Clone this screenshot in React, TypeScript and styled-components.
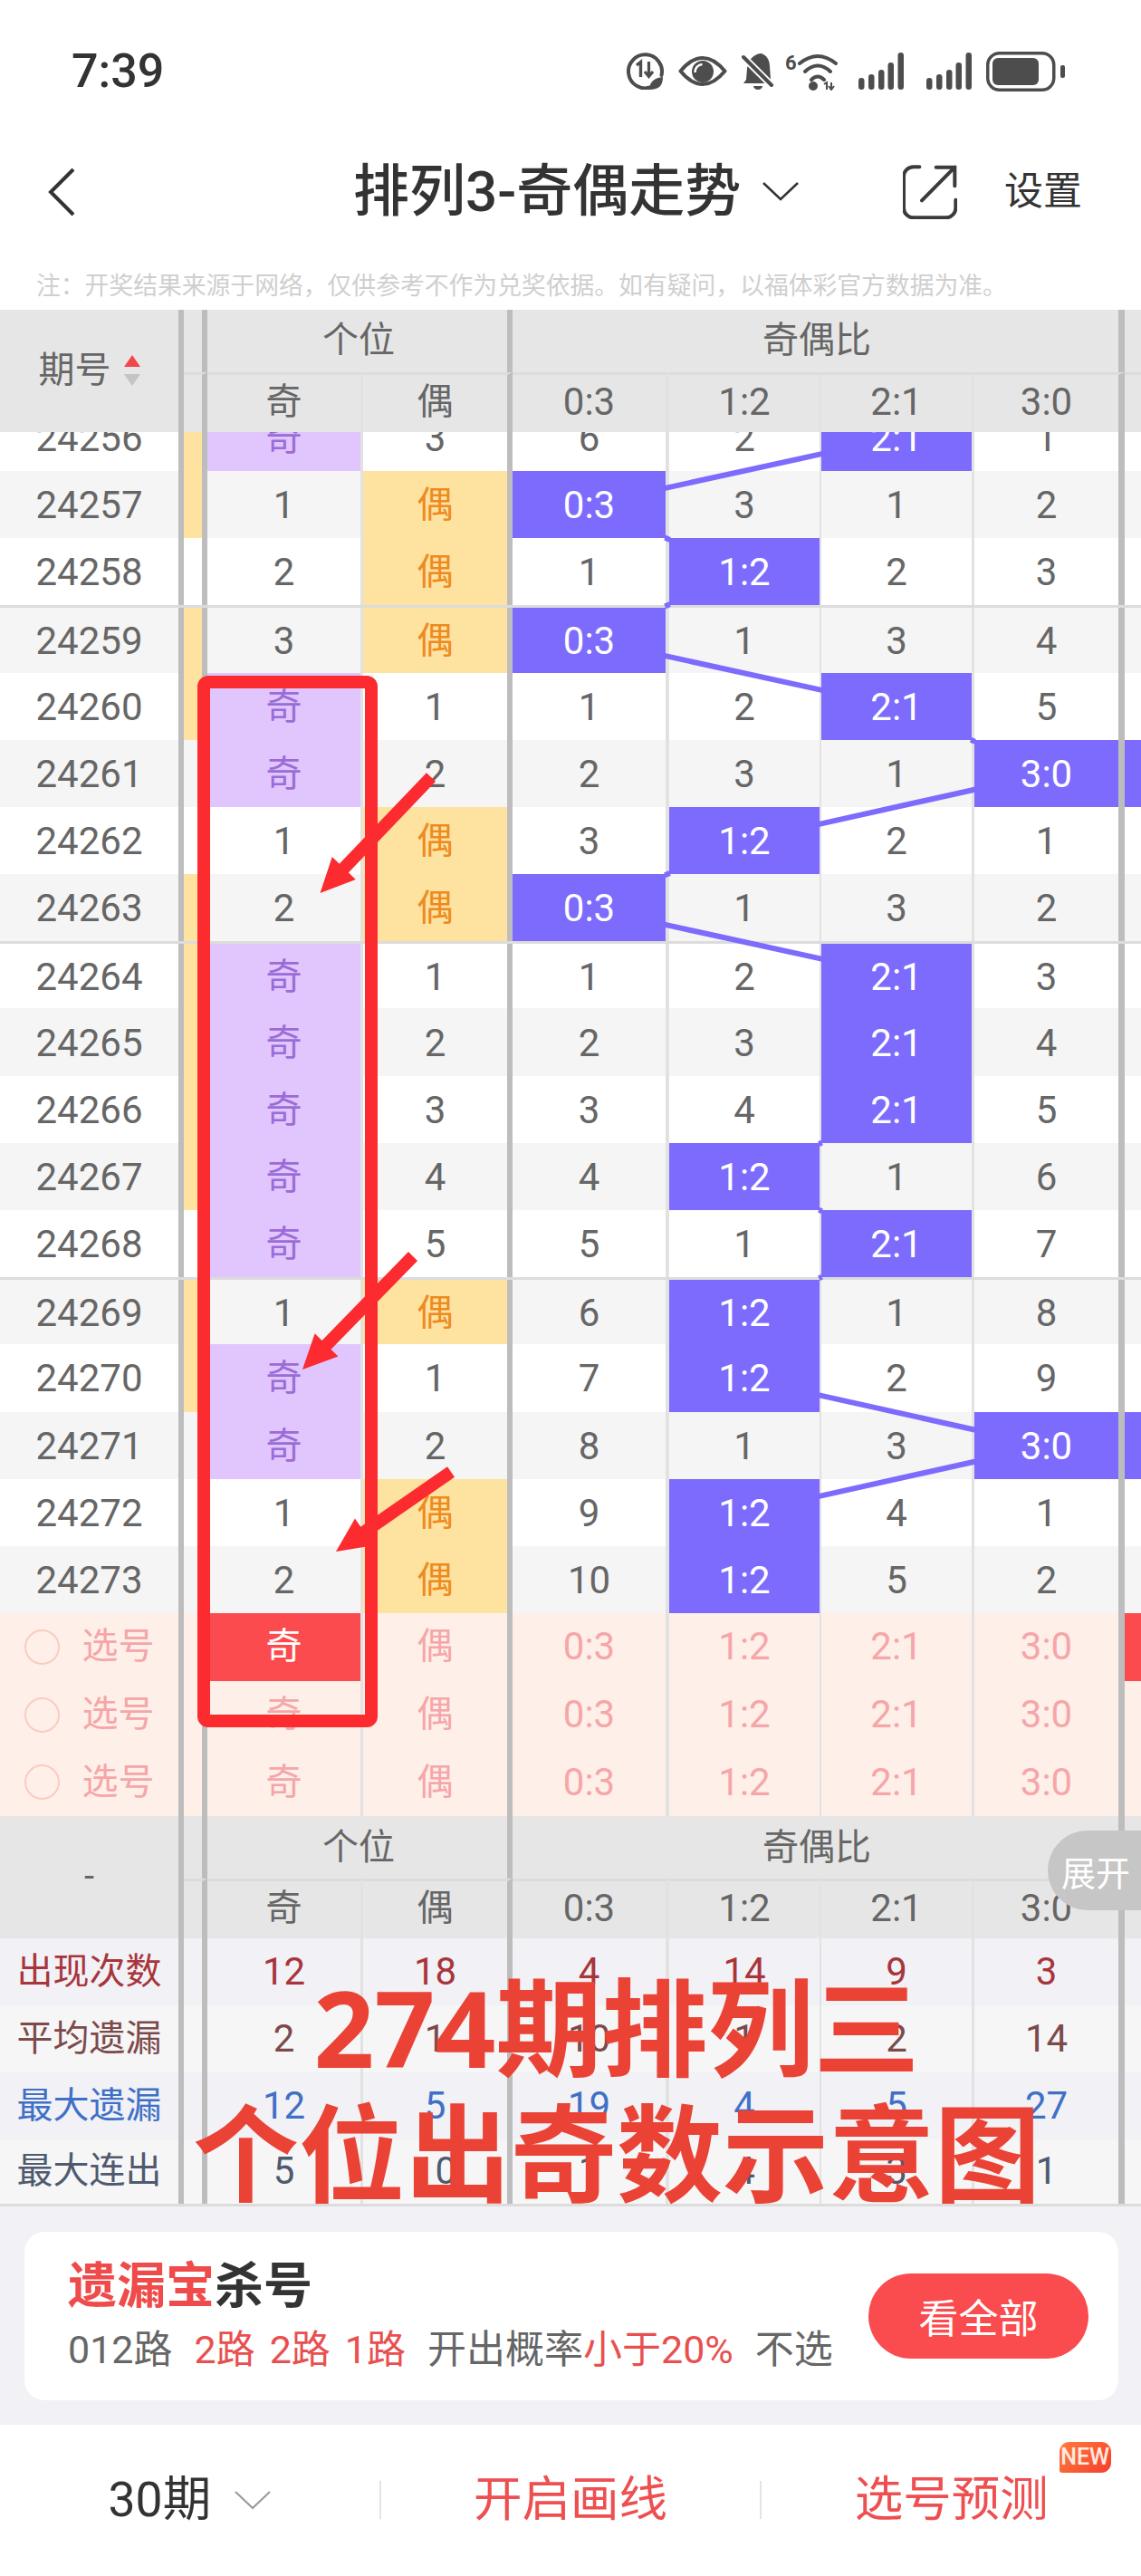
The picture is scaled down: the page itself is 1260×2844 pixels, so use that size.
import React from "react";
import styled, { createGlobalStyle } from "styled-components";

const Global = createGlobalStyle`
  html, body { margin: 0; padding: 0; background: #fff; }
  body { width: 1260px; font-family: Roboto, "Noto Sans CJK SC", sans-serif; }
`;

const COLS = "203px 26px 172px 165px 173px 168px 169px 166px 18px";
const RULES = [6, 6, 3, 6, 4, 2, 3, 7, 0];
const ROW_H = 74.2;

const Page = styled.div`
  position: relative;
  width: 1260px;
  height: 2844px;
  overflow: hidden;
  display: flex;
  flex-direction: column;
  background: #fff;
  color: #666;
`;

const StatusBar = styled.div`
  height: 158px;
  box-sizing: border-box;
  padding: 0 84px 0 79px;
  display: flex;
  align-items: center;
  justify-content: space-between;
`;
const Clock = styled.div`
  font-size: 52px;
  font-weight: 500;
  color: #333;
  line-height: 1;
`;
const StatusIcons = styled.div`
  display: flex;
  align-items: center;
  gap: 16px;
`;
const Glyph = styled.svg`
  display: block;
  flex: none;
`;

const Nav = styled.div`
  height: 108px;
  display: grid;
  grid-template-columns: 390px 607px 1fr;
  align-items: center;
`;
const NavLeft = styled.div`
  padding-left: 52px;
`;
const TitleWrap = styled.div`
  display: flex;
  align-items: center;
  gap: 24px;
`;
const Title = styled.div`
  font-size: 62px;
  line-height: 1;
  font-weight: 500;
  color: #333;
  white-space: nowrap;
`;
const NavRight = styled.div`
  display: flex;
  align-items: center;
  gap: 52px;
`;
const NavLink = styled.div`
  font-size: 43px;
  line-height: 1;
  color: #333;
`;
const Note = styled.div`
  height: 76px;
  box-sizing: border-box;
  padding: 20px 0 0 40px;
  display: flex;
  align-items: center;
  font-size: 26.8px;
  color: #cfcfcf;
  white-space: nowrap;
`;

const HeadGrid = styled.div`
  display: grid;
  grid-template-columns: ${COLS};
  grid-template-rows: 69px 65.7px;
  background: #e6e6e6;
`;
const Cell = styled.div<{ $col: number }>`
  box-sizing: border-box;
  min-width: 0;
  display: flex;
  align-items: center;
  justify-content: center;
  line-height: 1;
  white-space: nowrap;
  border-right: ${(p) => RULES[p.$col]}px solid ${(p) => (RULES[p.$col] >= 6 ? "#bdbdbd" : "#e2e2e2")};
`;
const Corner = styled(Cell)`
  grid-row: 1 / 3;
  gap: 14px;
  font-size: 40px;
`;
const GroupHead = styled(Cell)<{ $span: number }>`
  grid-column: span ${(p) => p.$span};
  padding-left: 3px;
  font-size: 40px;
`;
const SubHead = styled(Cell)<{ $hz?: boolean }>`
  border-top: 3px solid #dcdcdc;
  padding-bottom: 2px;
  font-size: ${(p) => (p.$hz ? 40 : 42)}px;
`;

const RowsViewport = styled.div`
  height: 1304.7px;
  overflow: hidden;
  display: flex;
  flex-direction: column;
  justify-content: flex-end;
`;
const RowsInner = styled.div`
  position: relative;
  flex: none;
`;
const Row = styled.div<{ $alt: boolean; $rule: boolean }>`
  display: grid;
  grid-template-columns: ${COLS};
  height: ${ROW_H}px;
  box-sizing: border-box;
  background: ${(p) => (p.$alt ? "#f5f5f5" : "#fff")};
  border-top: ${(p) => (p.$rule ? "3px solid #dcdcdc" : "none")};
`;
const DataCell = styled(Cell)<{ $tone?: string }>`
  font-size: 42px;
  padding-top: 2px;
  color: #666;
  ${(p) => p.$tone === "odd" && "background:#e0c6fc;color:#9c6bd8;font-size:40px;"}
  ${(p) => p.$tone === "even" && "background:#fde2a0;color:#ee8a1e;font-size:40px;"}
  ${(p) => p.$tone === "ratio" && "background:#7c6bfd;color:#fff;"}
  ${(p) => p.$tone === "mark" && "background:#fde2a0;"}
`;
const Connectors = styled.svg`
  position: absolute;
  left: 0;
  top: 0;
  pointer-events: none;
`;

const PickRow = styled.div`
  display: grid;
  grid-template-columns: ${COLS};
  height: 74.67px;
  background: #ffefe9;
`;
const PickCell = styled(Cell)<{ $hz?: boolean; $on?: boolean }>`
  font-size: ${(p) => (p.$hz ? 40 : 42)}px;
  color: #f5a6a8;
  ${(p) => p.$on && "background:#fb4b4e;color:#fff;"}
`;
const PickHead = styled(Cell)`
  gap: 25px;
  font-size: 40px;
  color: #f5a6a8;
`;
const Radio = styled.span`
  width: 39px;
  height: 39px;
  box-sizing: border-box;
  border: 2px solid #fbcbc0;
  border-radius: 50%;
`;

const StatRow = styled.div<{ $alt: boolean; $h: number; $color: string }>`
  display: grid;
  grid-template-columns: ${COLS};
  height: ${(p) => p.$h}px;
  background: ${(p) => (p.$alt ? "#f6f6f7" : "#f1f1f6")};
  color: ${(p) => p.$color};
`;
const StatLabel = styled(Cell)`
  font-size: 40px;
`;
const StatCell = styled(Cell)`
  font-size: 42px;
`;
const StatsEnd = styled.div`
  height: 3px;
  background: #dcdcdc;
`;

const Lower = styled.div`
  height: 241px;
  box-sizing: border-box;
  padding: 28px 25px 27px 27px;
  background: #f1f1f6;
`;
const Promo = styled.div`
  height: 186px;
  box-sizing: border-box;
  padding: 0 33px 0 48px;
  border-radius: 22px;
  background: #fff;
  display: flex;
  align-items: center;
  justify-content: space-between;
`;
const PromoText = styled.div`
  display: flex;
  flex-direction: column;
  gap: 14px;
`;
const PromoTitle = styled.div`
  font-size: 54px;
  line-height: 60px;
  font-weight: 700;
  color: #333;
  white-space: nowrap;
`;
const Red = styled.span`
  color: #f04b4b;
`;
const PromoLine = styled.div`
  font-size: 43px;
  line-height: 50px;
  color: #666;
  white-space: nowrap;
  display: flex;
`;
const Seg = styled.span<{ $gap?: number; $red?: boolean }>`
  margin-left: ${(p) => p.$gap ?? 0}px;
  color: ${(p) => (p.$red ? "#e85050" : "#666")};
`;
const ActionButton = styled.div`
  width: 243px;
  height: 94px;
  border-radius: 47px;
  background: #fa4b4e;
  color: #fff;
  font-size: 44px;
  display: flex;
  align-items: center;
  justify-content: center;
`;

const BottomBar = styled.div`
  height: 167px;
  background: #fff;
  display: flex;
  align-items: center;
`;
const BarItem = styled.div`
  flex: 1;
  display: flex;
  align-items: center;
  justify-content: center;
  gap: 26px;
`;
const BarDivider = styled.div`
  width: 2px;
  height: 42px;
  background: #e4e4e4;
`;
const BarLabel = styled.div<{ $red?: boolean }>`
  position: relative;
  font-size: 53.500px;
  line-height: 60px;
  color: ${(p) => (p.$red ? "#ee4f50" : "#333")};
`;
const NewBadge = styled.span`
  position: absolute;
  left: calc(100% + 12px);
  top: -34px;
  width: 57px;
  height: 34px;
  border-radius: 11px 11px 11px 3px;
  background: linear-gradient(135deg, #ff7c3e, #f43f2c);
  color: #ffe9e0;
  font-size: 25px;
  font-weight: 500;
  line-height: 34px;
  text-align: center;
`;

const ExpandTab = styled.div`
  position: absolute;
  left: 1157px;
  top: 2021px;
  width: 103px;
  height: 88px;
  box-sizing: border-box;
  padding-left: 15px;
  border-radius: 44px 0 0 44px;
  background: #c6c6c6;
  color: #fff;
  font-size: 38px;
  display: flex;
  align-items: center;
`;
const Annotation = styled.svg`
  position: absolute;
  left: 0;
  top: 0;
  pointer-events: none;
`;
const Caption = styled.div`
  position: absolute;
  left: 0;
  top: 2168px;
  width: 1362px;
  text-align: center;
  color: #ea4335;
  font-size: 117px;
  line-height: 139px;
  font-weight: 700;
  font-family: "Noto Sans", "Noto Sans CJK SC", sans-serif;
  white-space: nowrap;
`;

type R = { id: number; left: "奇" | number; right: "偶" | number; gaps: (number | null)[]; mark: boolean; edge?: boolean };
const row = (id: number, left: "奇" | number, right: "偶" | number, gaps: (number | null)[], mark: boolean, edge?: boolean): R => ({
  id, left, right, gaps, mark, edge,
});
const ROWS: R[] = [
  row(24256, "奇", 3, [6, 2, null, 1], true),
  row(24257, 1, "偶", [null, 3, 1, 2], true),
  row(24258, 2, "偶", [1, null, 2, 3], false),
  row(24259, 3, "偶", [null, 1, 3, 4], true),
  row(24260, "奇", 1, [1, 2, null, 5], true),
  row(24261, "奇", 2, [2, 3, 1, null], false, true),
  row(24262, 1, "偶", [3, null, 2, 1], false),
  row(24263, 2, "偶", [null, 1, 3, 2], true),
  row(24264, "奇", 1, [1, 2, null, 3], true),
  row(24265, "奇", 2, [2, 3, null, 4], true),
  row(24266, "奇", 3, [3, 4, null, 5], true),
  row(24267, "奇", 4, [4, null, 1, 6], true),
  row(24268, "奇", 5, [5, 1, null, 7], false),
  row(24269, 1, "偶", [6, null, 1, 8], true),
  row(24270, "奇", 1, [7, null, 2, 9], true),
  row(24271, "奇", 2, [8, 1, 3, null], false, true),
  row(24272, 1, "偶", [9, null, 4, 1], false),
  row(24273, 2, "偶", [10, null, 5, 2], false),
];
const RATIOS = ["0:3", "1:2", "2:1", "3:0"];
const RATIO_X = [
  { c: 650.5, h: 84.5 },
  { c: 822, h: 83 },
  { c: 990, h: 83 },
  { c: 1155.5, h: 79.5 },
];

function connectorSegments() {
  const segs: { x1: number; y1: number; x2: number; y2: number }[] = [];
  for (let i = 0; i + 1 < ROWS.length; i++) {
    const a = ROWS[i].gaps.indexOf(null);
    const b = ROWS[i + 1].gaps.indexOf(null);
    if (a === b) continue;
    const ax = RATIO_X[a].c, ay = ROW_H * i + ROW_H / 2;
    const bx = RATIO_X[b].c, by = ROW_H * (i + 1) + ROW_H / 2;
    const dx = bx - ax, dy = by - ay;
    const t1 = Math.min(RATIO_X[a].h / Math.abs(dx), ROW_H / 2 / dy) - 0.004;
    const t2 = Math.min(RATIO_X[b].h / Math.abs(dx), ROW_H / 2 / dy) - 0.004;
    segs.push({ x1: ax + dx * t1, y1: ay + dy * t1, x2: bx - dx * t2, y2: by - dy * t2 });
  }
  return segs;
}

const INK = "#4d4d4d";

function StatusGlyphs() {
  return (
    <StatusIcons>
      <Glyph width="41" height="41" viewBox="0 0 41 41">
        <path d="M26 38.5A18.5 18.5 0 1 1 38.5 25" fill="none" stroke={INK} strokeWidth="4" strokeLinecap="round" />
        <path d="M11 14l4.5-3.5V27" fill="none" stroke={INK} strokeWidth="3.4" />
        <path d="M24.5 10v15M20 21l4.5 5.500L29 21" fill="none" stroke={INK} strokeWidth="3.2" />
        <path d="M25 41c0-9 6-13 15-14 0 9-4 14-15 14z" fill={INK} />
      </Glyph>
      <Glyph width="54" height="33" viewBox="0 0 54 33">
        <path d="M2.500 16.500C12 5 20 2 27 2s15 3 24.500 14.500C42 28 34 31 27 31S12 28 2.500 16.500z" fill="none" stroke={INK} strokeWidth="4" strokeLinejoin="round" />
        <circle cx="27" cy="17" r="12" fill={INK} />
        <path d="M18.500 18a8.500 8.500 0 0 1 8-9" fill="none" stroke="#fff" strokeWidth="2.500" />
      </Glyph>
      <Glyph width="36" height="41" viewBox="0 0 36 41">
        <path d="M21 1c6 1 10 7 10 14l1 15 3 4H2l3-4 1-12C7 8 13 2 21 1z" fill={INK} />
        <path d="M0 3l33 33" stroke="#fff" strokeWidth="8" />
        <path d="M2 5l31 31" stroke={INK} strokeWidth="4" strokeLinecap="round" />
        <path d="M13 37h10a5 4 0 0 1-10 0z" fill={INK} />
      </Glyph>
      <Glyph width="57" height="43" viewBox="0 0 57 43" style={{ marginLeft: -3 }}>
        <text x="-1" y="20" fontFamily="Roboto, sans-serif" fontSize="22" fontWeight="700" fill={INK}>6</text>
        <path d="M15 13Q35-3 55 13M21 22Q35 9 49 22M28 31Q35 24 42 31" fill="none" stroke={INK} strokeWidth="4" strokeLinecap="round" />
        <circle cx="30" cy="38" r="5" fill={INK} />
        <path d="M42 36l3-2v8M50 34v8M47 38l3 4 3-4" fill="none" stroke={INK} strokeWidth="2" />
      </Glyph>
      <Glyph width="50" height="41" viewBox="0 0 50 41" style={{ marginLeft: 7 }}>
        <SignalBars />
      </Glyph>
      <Glyph width="50" height="41" viewBox="0 0 50 41" style={{ marginLeft: 9 }}>
        <SignalBars />
      </Glyph>
      <Glyph width="87" height="44" viewBox="0 0 87 44">
        <rect x="1.750" y="1.750" width="73" height="40.500" rx="13" fill="none" stroke={INK} strokeWidth="3.500" />
        <rect x="7" y="7" width="51" height="30" rx="6" fill={INK} />
        <rect x="82" y="15" width="5" height="14" rx="2" fill={INK} />
      </Glyph>
    </StatusIcons>
  );
}
function SignalBars() {
  const bars = [
    [0, 28],
    [11, 24],
    [22, 19],
    [32.5, 11],
    [43.5, 0],
  ];
  return (
    <>
      {bars.map(([x, y]) => (
        <rect key={x} x={x} y={y} width="6.500" height={41 - y} rx="3.250" fill={INK} />
      ))}
    </>
  );
}

function TableHead({ corner }: { corner: React.ReactNode }) {
  return (
    <HeadGrid>
      <Corner $col={0}>{corner}</Corner>
      <Cell $col={1} />
      <GroupHead $col={3} $span={2}>个位</GroupHead>
      <GroupHead $col={7} $span={4}>奇偶比</GroupHead>
      <Cell $col={8} />
      <SubHead $col={1} />
      <SubHead $col={2} $hz>奇</SubHead>
      <SubHead $col={3} $hz>偶</SubHead>
      {RATIOS.map((r, i) => (
        <SubHead key={r} $col={4 + i}>{r}</SubHead>
      ))}
      <SubHead $col={8} />
    </HeadGrid>
  );
}

const STATS = [
  { label: "出现次数", color: "#a8353b", h: 74, v: [12, 18, 4, 14, 9, 3] },
  { label: "平均遗漏", color: "#7c4a4a", h: 74, v: [2, 1, 10, 1, 2, 14] },
  { label: "最大遗漏", color: "#4070c6", h: 74, v: [12, 5, 19, 4, 5, 27] },
  { label: "最大连出", color: "#4f5a6e", h: 71.3, v: [5, 10, 1, 4, 3, 1] },
];

function Arrow({ x1, y1, x2, y2 }: { x1: number; y1: number; x2: number; y2: number }) {
  const dx = x2 - x1, dy = y2 - y1;
  const len = Math.hypot(dx, dy);
  const ux = dx / len, uy = dy / len;
  const nx = -uy, ny = ux;
  const head = 38;
  const bx = x2 - ux * head, by = y2 - uy * head;
  return (
    <>
      <line x1={x1} y1={y1} x2={bx + ux * 8} y2={by + uy * 8} stroke="#fb2b30" strokeWidth="14" />
      <polygon
        points={`${x2},${y2} ${bx + nx * 18},${by + ny * 18} ${bx - nx * 18},${by - ny * 18}`}
        fill="#fb2b30"
      />
    </>
  );
}

export default function App() {
  const segs = connectorSegments();
  return (
    <Page>
      <Global />
      <StatusBar>
        <Clock>7:39</Clock>
        <StatusGlyphs />
      </StatusBar>
      <Nav>
        <NavLeft>
          <Glyph width="32" height="54" viewBox="0 0 32 54">
            <path d="M29 2L4 27l25 25" fill="none" stroke="#333" strokeWidth="4" />
          </Glyph>
        </NavLeft>
        <TitleWrap>
          <Title>排列3-奇偶走势</Title>
          <Glyph width="40" height="21" viewBox="0 0 40 21">
            <path d="M1 1l19 18L39 1" fill="none" stroke="#333" strokeWidth="2.500" />
          </Glyph>
        </TitleWrap>
        <NavRight>
          <Glyph width="60" height="60" viewBox="50 40 180 180">
            <path d="M105 47H85a32 32 0 0 0-32 32v104a32 32 0 0 0 32 32h108a32 32 0 0 0 32-32v-27" fill="none" stroke="#3b3b3b" strokeWidth="12" strokeLinecap="round" />
            <path d="M113 158L222 48M160 48h62v62" fill="none" stroke="#3b3b3b" strokeWidth="12" strokeLinecap="round" />
          </Glyph>
          <NavLink>设置</NavLink>
        </NavRight>
      </Nav>
      <Note>注：开奖结果来源于网络，仅供参考不作为兑奖依据。如有疑问，以福体彩官方数据为准。</Note>

      <TableHead
        corner={
          <>
            <span>期号</span>
            <Glyph width="18" height="34" viewBox="0 0 18 34">
              <path d="M9 0l9 13H0z" fill="#f2474a" />
              <path d="M9 34L0 21h18z" fill="#c4c4c4" />
            </Glyph>
          </>
        }
      />

      <RowsViewport>
        <RowsInner>
          {ROWS.map((r, i) => (
            <Row key={r.id} $alt={i % 2 === 1} $rule={i === 3 || i === 8 || i === 13}>
              <DataCell $col={0}>{r.id}</DataCell>
              <DataCell $col={1} $tone={r.mark ? "mark" : undefined} />
              <DataCell $col={2} $tone={r.left === "奇" ? "odd" : undefined}>{r.left}</DataCell>
              <DataCell $col={3} $tone={r.right === "偶" ? "even" : undefined}>{r.right}</DataCell>
              {r.gaps.map((g, k) => (
                <DataCell key={k} $col={4 + k} $tone={g === null ? "ratio" : undefined}>
                  {g === null ? RATIOS[k] : g}
                </DataCell>
              ))}
              <DataCell $col={8} $tone={r.edge ? "ratio" : undefined} />
            </Row>
          ))}
          <Connectors width="1260" height={ROW_H * ROWS.length}>
            {segs.map((s, i) => (
              <line key={i} x1={s.x1} y1={s.y1} x2={s.x2} y2={s.y2} stroke="#7c6bfd" strokeWidth="6" />
            ))}
          </Connectors>
        </RowsInner>
      </RowsViewport>

      {[0, 1, 2].map((n) => (
        <PickRow key={n}>
          <PickHead $col={0}>
            <Radio />
            <span>选号</span>
          </PickHead>
          <PickCell $col={1} />
          <PickCell $col={2} $hz $on={n === 0}>奇</PickCell>
          <PickCell $col={3} $hz>偶</PickCell>
          {RATIOS.map((r, i) => (
            <PickCell key={r} $col={4 + i}>{r}</PickCell>
          ))}
          <PickCell $col={8} $on={n === 0} />
        </PickRow>
      ))}

      <TableHead corner={<span>-</span>} />

      {STATS.map((s, i) => (
        <StatRow key={s.label} $alt={i % 2 === 1} $h={s.h} $color={s.color}>
          <StatLabel $col={0}>{s.label}</StatLabel>
          <Cell $col={1} />
          {s.v.map((v, k) => (
            <StatCell key={k} $col={k === 0 ? 2 : k === 1 ? 3 : 2 + k}>{v}</StatCell>
          ))}
          <Cell $col={8} />
        </StatRow>
      ))}
      <StatsEnd />

      <Lower>
        <Promo>
          <PromoText>
            <PromoTitle>
              <Red>遗漏宝</Red>杀号
            </PromoTitle>
            <PromoLine>
              <Seg>012路</Seg>
              <Seg $gap={24} $red>2路</Seg>
              <Seg $gap={16} $red>2路</Seg>
              <Seg $gap={16} $red>1路</Seg>
              <Seg $gap={24}>开出概率</Seg>
              <Seg $red>小于20%</Seg>
              <Seg $gap={24}>不选</Seg>
            </PromoLine>
          </PromoText>
          <ActionButton>看全部</ActionButton>
        </Promo>
      </Lower>

      <BottomBar>
        <BarItem>
          <BarLabel>30期</BarLabel>
          <Glyph width="40" height="21" viewBox="0 0 40 21">
            <path d="M1 1l19 18L39 1" fill="none" stroke="#999" strokeWidth="2" />
          </Glyph>
        </BarItem>
        <BarDivider />
        <BarItem>
          <BarLabel $red>开启画线</BarLabel>
        </BarItem>
        <BarDivider />
        <BarItem>
          <BarLabel $red>
            选号预测
            <NewBadge>NEW</NewBadge>
          </BarLabel>
        </BarItem>
      </BottomBar>

      <ExpandTab>展开</ExpandTab>

      <Annotation width="1260" height="2844">
        <rect x="225" y="753" width="185" height="1147" rx="5" fill="none" stroke="#fb2b30" strokeWidth="14" />
        <Arrow x1={476} y1={858} x2={353.5} y2={986} />
        <Arrow x1={456} y1={1387} x2={334} y2={1512} />
        <Arrow x1={498} y1={1625} x2={371} y2={1713} />
      </Annotation>
      <Caption>
        274期排列三
        <br />
        个位出奇数示意图
      </Caption>
    </Page>
  );
}
